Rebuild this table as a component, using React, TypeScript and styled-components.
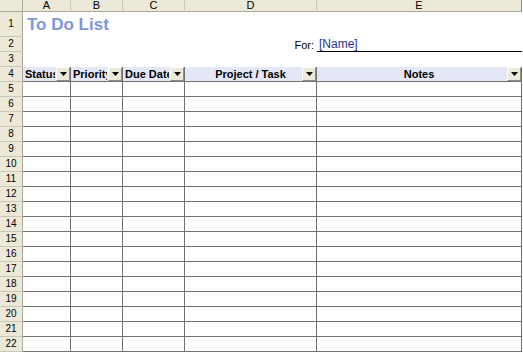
import React from 'react';
import styled, { createGlobalStyle } from 'styled-components';

const HEAD_BG = '#ECE9D8';
const HEAD_LINE = '#ACA899';
const HEAD_SEP = '#CBC7B8';
const GRID = '#707070';
const FILTER_BG = '#E4E8F6';

const COLS = ['A', 'B', 'C', 'D', 'E'];
const WIDTHS = [48, 52, 62, 132, 205];
const BODY_ROWS = Array.from({ length: 18 }, (_, i) => i + 5);

type Filter = { label: string; align: 'left' | 'center' };

const FILTERS: Filter[] = [
	{ label: 'Status', align: 'left' },
	{ label: 'Priority', align: 'left' },
	{ label: 'Due Date', align: 'left' },
	{ label: 'Project / Task', align: 'center' },
	{ label: 'Notes', align: 'center' },
];

const GlobalStyle = createGlobalStyle`
	body {
		margin: 0;
		background: #fff;
		font-family: "Liberation Sans", Arial, sans-serif;
	}
`;

const Sheet = styled.div`
	display: grid;
	grid-template-columns: 23px ${WIDTHS.map((w) => `${w}px`).join(' ')};
	grid-template-rows: 12px 25px repeat(21, 15px);
	width: 522px;
	height: 353px;
	overflow: hidden;

	& > * {
		box-sizing: border-box;
	}
`;

const Corner = styled.div`
	background: ${HEAD_BG};
	border-right: 1px solid ${HEAD_LINE};
	border-bottom: 1px solid ${HEAD_LINE};
`;

const ColHead = styled.div<{ $last?: boolean }>`
	display: flex;
	align-items: center;
	justify-content: center;
	background: ${HEAD_BG};
	border-right: 1px solid ${(p) => (p.$last ? '#8F8C7E' : HEAD_SEP)};
	border-bottom: 1px solid ${HEAD_LINE};
	font-size: 11px;
	line-height: 11px;
	color: #000;
`;

const RowHead = styled.div`
	display: flex;
	align-items: center;
	justify-content: center;
	background: ${HEAD_BG};
	border-right: 1px solid ${HEAD_LINE};
	border-bottom: 1px solid ${HEAD_SEP};
	font-size: 10px;
	line-height: 10px;
	color: #000;
`;

const Title = styled.div`
	grid-column: 2 / span 5;
	display: flex;
	align-items: flex-end;
	padding: 0 0 4px 4px;
	font-size: 17px;
	font-weight: bold;
	line-height: 17px;
	color: #8196D6;
	white-space: nowrap;
`;

const Blank = styled.div<{ $span?: number }>`
	grid-column: span ${(p) => p.$span ?? 1};
`;

const ForLabel = styled.div`
	display: flex;
	align-items: center;
	justify-content: flex-end;
	padding-right: 3px;
	font-size: 11px;
	color: #000;
`;

const NameField = styled.div`
	display: flex;
	align-items: center;
	padding-left: 2px;
	border-bottom: 1px solid #000;
	margin-right: -1px;
	font-size: 12px;
	color: #23358A;
`;

const FilterCell = styled.div`
	position: relative;
	display: flex;
	align-items: center;
	background: ${FILTER_BG};
	border-right: 1px solid ${GRID};
	border-bottom: 1px solid ${GRID};
	overflow: hidden;
`;

// left-aligned captions get clipped just short of the drop button
const FilterLabel = styled.span<{ $align: 'left' | 'center' }>`
	flex: 1;
	min-width: 0;
	overflow: hidden;
	padding-left: ${(p) => (p.$align === 'left' ? '2px' : '0')};
	margin-right: ${(p) => (p.$align === 'left' ? '15px' : '0')};
	text-align: ${(p) => p.$align};
	font-size: 11px;
	font-weight: bold;
	white-space: nowrap;
	color: #000;
`;

const DropButton = styled.span`
	position: absolute;
	top: 0;
	right: 0;
	width: 14px;
	height: 14px;
	box-sizing: border-box;
	display: flex;
	align-items: center;
	justify-content: center;
	background: ${HEAD_BG};
	border-top: 1px solid #fff;
	border-left: 1px solid #fff;
	border-right: 1px solid #8F8C7E;
	border-bottom: 1px solid #8F8C7E;
`;

const Cell = styled.div`
	border-right: 1px solid ${GRID};
	border-bottom: 1px solid ${GRID};
`;

const Arrow = () => (
	<svg width="7" height="4" viewBox="0 0 7 4">
		<polygon points="0,0 7,0 3.5,4" fill="#000" />
	</svg>
);

export default function App() {
	return (
		<>
			<GlobalStyle />
			<Sheet>
				<Corner />
				{COLS.map((c, i) => (
					<ColHead key={c} $last={i === COLS.length - 1}>{c}</ColHead>
				))}

				<RowHead>1</RowHead>
				<Title>To Do List</Title>

				<RowHead>2</RowHead>
				<Blank $span={3} />
				<ForLabel>For:</ForLabel>
				<NameField>[Name]</NameField>

				<RowHead>3</RowHead>
				<Blank $span={5} />

				<RowHead>4</RowHead>
				{FILTERS.map((f) => (
					<FilterCell key={f.label}>
						<FilterLabel $align={f.align}>{f.label}</FilterLabel>
						<DropButton><Arrow /></DropButton>
					</FilterCell>
				))}

				{BODY_ROWS.map((r) => (
					<React.Fragment key={r}>
						<RowHead>{r}</RowHead>
						{COLS.map((c) => <Cell key={c} />)}
					</React.Fragment>
				))}
			</Sheet>
		</>
	);
}
